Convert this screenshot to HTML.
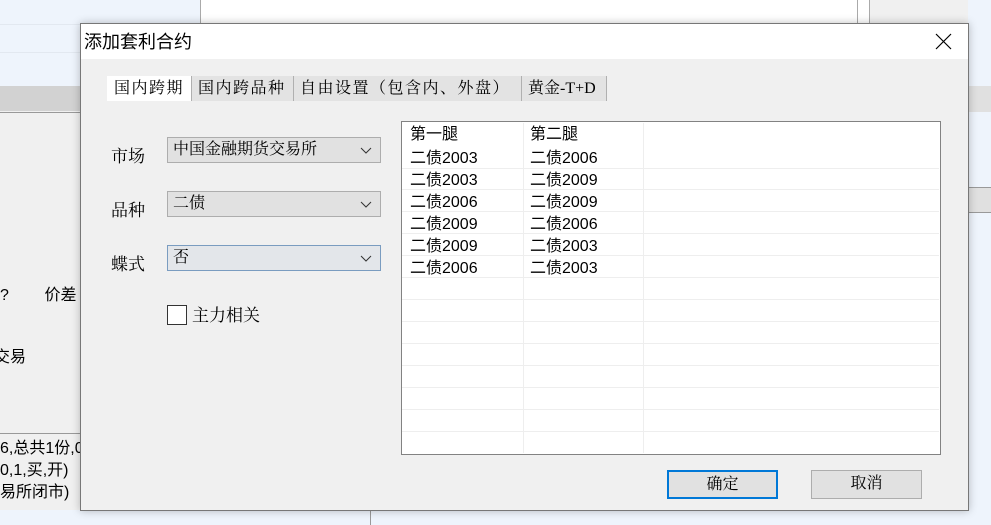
<!DOCTYPE html>
<html><head><meta charset="utf-8"><style>
*{margin:0;padding:0;box-sizing:border-box}
body{width:991px;height:525px;overflow:hidden;position:relative;background:#f0f0f0;font-family:"Liberation Sans","Noto Sans CJK SC",sans-serif;font-size:16px;color:#000}
.a{position:absolute}
.s{font-family:"Liberation Serif","Noto Serif CJK SC",serif}
.cb{position:absolute;left:167px;width:214px;height:26px;background:#e1e1e1;border:1px solid #adadad;font-size:16px;padding-left:5px;line-height:24px}
.cb svg{position:absolute;right:8px;top:9px}
.tab{position:absolute;top:76px;height:25px;line-height:25px;background:#e3e3e3;font-size:16px;letter-spacing:1.5px;border-right:1px solid #b0b0b0;padding-left:6px;white-space:nowrap;overflow:hidden}
.row{position:absolute;left:402px;width:537px;height:1px;background:#eeeeee}
.c{position:absolute;font-size:16px;line-height:20px}
.btn{position:absolute;top:470px;width:111px;height:29px;background:#e1e1e1;border:1px solid #adadad;text-align:center;line-height:26px;font-size:16px}
</style></head><body>
<div class="a" style="left:0;top:0;width:200px;height:86px;background:#eef4fc"></div>
<div class="a" style="left:0;top:24px;width:200px;height:1px;background:#e2e8f0"></div>
<div class="a" style="left:0;top:52px;width:200px;height:1px;background:#e2e8f0"></div>
<div class="a" style="left:0;top:86px;width:200px;height:25px;background:#d2d2d2"></div>
<div class="a" style="left:0;top:112px;width:80px;height:1px;background:#999"></div>
<div class="a" style="left:200px;top:0;width:670px;height:23px;background:#fff;border-left:1px solid #aaa;border-right:1px solid #aaa"></div>
<div class="a" style="left:857px;top:0;width:1px;height:23px;background:#aaa"></div>
<div class="a" style="left:968px;top:0;width:23px;height:525px;background:#eef4fc"></div>
<div class="a" style="left:968px;top:86px;width:23px;height:26px;background:#e0e0e0"></div>
<div class="a" style="left:968px;top:187px;width:23px;height:26px;background:#e0e0e0;border-top:1px solid #999;border-bottom:1px solid #999"></div>
<div class="a" style="left:0;top:433px;width:80px;height:1px;background:#999"></div>
<div class="a" style="left:0;top:510px;width:991px;height:15px;background:#eef4fc"></div>
<div class="a" style="left:370px;top:510px;width:1px;height:15px;background:#999"></div>
<div class="a" style="left:0;top:286px;font-size:16px;line-height:20px;width:80px;overflow:hidden;white-space:nowrap">?&nbsp;&nbsp;&nbsp;&nbsp;&nbsp;&nbsp;&nbsp;&nbsp;价差</div>
<div class="a" style="left:-6px;top:348px;line-height:20px">交易</div>
<div class="a" style="left:0;top:438px;line-height:22px;width:80px;overflow:hidden;white-space:nowrap;font-size:16px">6,总共1份,0<br>0,1,买,开)<br>易所闭市)</div>
<div class="a" style="left:80px;top:23px;width:889px;height:488px;background:#f0f0f0;border:1px solid #777;box-shadow:0 0 8px rgba(0,0,0,.25)"></div>
<div class="a" style="left:81px;top:24px;width:887px;height:35px;background:#fff"></div>
<div class="a" style="left:84px;top:30px;font-size:18px;line-height:24px">添加套利合约</div>
<svg class="a" style="left:935px;top:33px" width="17" height="17"><path d="M1 1L16 16M16 1L1 16" stroke="#000" stroke-width="1.2"/></svg>
<div class="tab s" style="left:107px;width:85px;background:#fff;padding-left:7px">国内跨期</div>
<div class="tab s" style="left:192px;width:102px">国内跨品种</div>
<div class="tab s" style="left:294px;width:228px">自由设置（包含内、外盘）</div>
<div class="tab s" style="left:522px;width:85px;padding-left:6px;letter-spacing:0">黄金-T+D</div>
<div class="a s" style="left:111px;top:142px;font-size:17px">市场</div>
<div class="a s" style="left:111px;top:196px;font-size:17px">品种</div>
<div class="a s" style="left:111px;top:250px;font-size:17px">蝶式</div>
<div class="cb s" style="top:137px">中国金融期货交易所<svg width="12" height="7"><path d="M1 1L6 6L11 1" stroke="#333" fill="none"/></svg></div>
<div class="cb s" style="top:191px">二债<svg width="12" height="7"><path d="M1 1L6 6L11 1" stroke="#333" fill="none"/></svg></div>
<div class="cb s" style="top:245px;background:#e3e6ea;border-color:#7a9cc0">否<svg width="12" height="7"><path d="M1 1L6 6L11 1" stroke="#333" fill="none"/></svg></div>
<div class="a" style="left:167px;top:305px;width:20px;height:20px;background:#fff;border:1px solid #333"></div>
<div class="a s" style="left:192px;top:305px;font-size:17px;line-height:22px">主力相关</div>
<div class="a" style="left:401px;top:121px;width:540px;height:334px;background:#fff;border:1px solid #828282"></div>
<div class="a" style="left:523px;top:123px;width:1px;height:330px;background:#eee"></div>
<div class="a" style="left:643px;top:123px;width:1px;height:330px;background:#eee"></div>
<div class="row" style="top:168px"></div><div class="row" style="top:189px"></div><div class="row" style="top:211px"></div>
<div class="row" style="top:233px"></div><div class="row" style="top:255px"></div><div class="row" style="top:277px"></div>
<div class="row" style="top:299px"></div><div class="row" style="top:321px"></div><div class="row" style="top:343px"></div>
<div class="row" style="top:365px"></div><div class="row" style="top:387px"></div><div class="row" style="top:409px"></div>
<div class="row" style="top:431px"></div>
<div class="c" style="left:410px;top:125px">第一腿</div><div class="c" style="left:530px;top:125px">第二腿</div>
<div class="c" style="left:410px;top:148px;line-height:22px">二债2003<br>二债2003<br>二债2006<br>二债2009<br>二债2009<br>二债2006</div>
<div class="c" style="left:530px;top:148px;line-height:22px">二债2006<br>二债2009<br>二债2009<br>二债2006<br>二债2003<br>二债2003</div>
<div class="btn s" style="left:667px;border:2px solid #0078d7">确定</div>
<div class="btn s" style="left:811px">取消</div>
</body></html>
